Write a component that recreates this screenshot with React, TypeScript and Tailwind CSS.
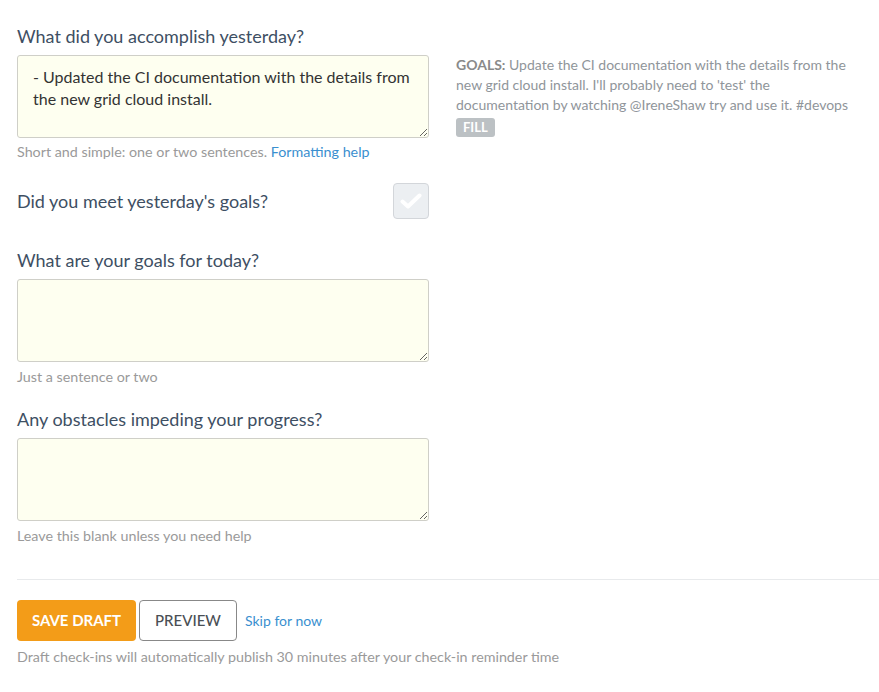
import React from 'react';

const labelCls = 'text-[18px] leading-[22px] text-[#3e4f63]';
const helpCls = 'text-[14.3px] leading-[18px] text-[#9a9a9a]';
const areaCls =
  'block w-[412px] h-[83px] mt-2 rounded-[3px] border border-[#cfcfc8] bg-[#fefff0] px-[15px] py-[10px] text-[16px] leading-[22px] text-[#333] outline-none';

export default function App() {
  return (
    <div className="min-h-screen bg-white pl-[17px] pt-[25px] font-['Lato','Open_Sans',sans-serif]">
      <div className="flex gap-[27px]">
        <div className="w-[412px] shrink-0">
          <div className={labelCls}>What did you accomplish yesterday?</div>
          <textarea
            className={areaCls}
            readOnly
            defaultValue={'- Updated the CI documentation with the details from the new grid cloud install.'}
          />
          <div className={`${helpCls} mt-[5px]`}>
            Short and simple: one or two sentences.{' '}
            <a className="text-[#3a8fcf]">Formatting help</a>
          </div>
        </div>

        <div className="pt-[30px] w-[400px] text-[14px] leading-[20px] text-[#8f959a]">
          <span className="font-bold text-[#8a8a8a]">GOALS:</span> Update the CI documentation with the details
          from the new grid cloud install. I'll probably need to 'test' the documentation by watching
          @IreneShaw try and use it. #devops
          <div className="mt-[2px]">
            <span className="inline-block rounded-[3px] bg-[#bcc1c4] px-[7px] text-[13px] leading-[19px] font-bold text-white">
              FILL
            </span>
          </div>
        </div>
      </div>

      <div className="mt-[22px] flex w-[412px] items-center justify-between">
        <div className={labelCls}>Did you meet yesterday's goals?</div>
        <div className="flex h-9 w-9 items-center justify-center rounded-[4px] border border-[#d3d6da] bg-[#eceff2]">
          <svg width="22" height="18" viewBox="0 0 22 18">
            <path d="M2.5 9.5 L8 14.5 L19.5 3.5" fill="none" stroke="#fff" strokeWidth="4" strokeLinecap="round" strokeLinejoin="round" />
          </svg>
        </div>
      </div>

      <div className={`${labelCls} mt-[30px]`}>What are your goals for today?</div>
      <textarea className={areaCls} readOnly defaultValue="" />
      <div className={`${helpCls} mt-[6px]`}>Just a sentence or two</div>

      <div className={`${labelCls} mt-[22px]`}>Any obstacles impeding your progress?</div>
      <textarea className={areaCls} readOnly defaultValue="" />
      <div className={`${helpCls} mt-[6px]`}>Leave this blank unless you need help</div>

      <div className="mt-[34px] border-t border-[#e8eaec]" />

      <div className="mt-[20px] flex items-center">
        <button className="h-[41px] w-[119px] rounded-[4px] bg-[#f39c18] text-[15px] font-bold uppercase text-white">
          Save Draft
        </button>
        <button className="ml-[3px] h-[41px] w-[98px] rounded-[4px] border border-[#888] bg-white text-[15px] font-medium uppercase text-[#4a4f55]">
          Preview
        </button>
        <a className="ml-[8px] text-[14px] text-[#3a8fcf]">Skip for now</a>
      </div>
      <div className={`${helpCls} mt-[7px]`}>
        Draft check-ins will automatically publish 30 minutes after your check-in reminder time
      </div>
    </div>
  );
}
